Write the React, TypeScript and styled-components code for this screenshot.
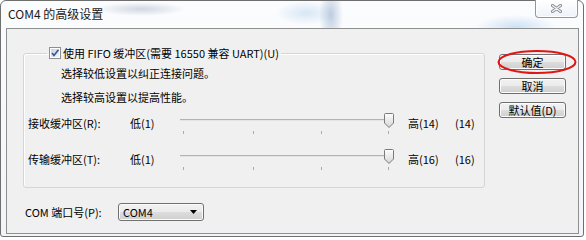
import styled, { createGlobalStyle } from "styled-components";

const GlobalStyle = createGlobalStyle`
  html, body {
    margin: 0;
    padding: 0;
    background: #ffffff;
  }
  body {
    font-family: "Noto Sans CJK SC", sans-serif;
    font-size: 11px;
    color: #000;
  }
`;

const Frame = styled.div`
  box-sizing: border-box;
  width: 584px;
  height: 237px;
  padding: 0 4px 2px 5px;
  border: 1px solid #6f6f6f;
  border-radius: 6px 6px 3px 3px;
  display: flex;
  flex-direction: column;
  background:
    radial-gradient(ellipse 12px 30px at 330px 14px, rgba(120, 150, 190, 0.45), transparent),
    radial-gradient(ellipse 30px 12px at 305px 12px, rgba(170, 205, 235, 0.45), transparent),
    radial-gradient(ellipse 40px 12px at 515px 26px, rgba(160, 200, 235, 0.5), transparent),
    radial-gradient(ellipse 45px 7px at 140px 8px, rgba(110, 130, 160, 0.3), transparent),
    linear-gradient(#fbfcfe, #f1f5fa);
`;

const TitleBar = styled.div`
  height: 27px;
  display: flex;
  justify-content: space-between;
  align-items: flex-start;
`;

const Title = styled.span`
  margin: 5px 0 0 2px;
  font-size: 12px;
  line-height: 16px;
  color: #1a1a1a;
`;

const CloseButton = styled.div`
  box-sizing: border-box;
  width: 43px;
  height: 18px;
  margin: -1px 1px 0 0;
  border: 1px solid #8e98a5;
  border-top: none;
  border-radius: 0 0 4px 4px;
  background: linear-gradient(#ffffff, #eef2f7);
  box-shadow: inset 0 0 0 1px rgba(255, 255, 255, 0.8);
  display: flex;
  align-items: center;
  justify-content: center;
`;

const Client = styled.div`
  flex: 1;
  display: flex;
  padding: 17px 0 0 16px;
  border: 1px solid #8e8f8f;
  background: #f0f0f0;
`;

const LeftColumn = styled.div`
  width: 462px;
  display: flex;
  flex-direction: column;
`;

const Group = styled.fieldset`
  box-sizing: border-box;
  margin: 0;
  padding: 0;
  height: 142px;
  min-width: 0;
  border: 1px solid #d5d5d5;
  border-radius: 3px;
  box-shadow: inset 1px 1px 0 #ffffff;
`;

const Legend = styled.legend`
  margin-left: 23px;
  padding: 0 2px;
  display: flex;
  align-items: center;
  gap: 2px;
  line-height: 14px;
`;

const Hint = styled.div`
  margin-top: 1px;
  padding-left: 37px;
  line-height: 24px;
`;

const Rows = styled.div`
  display: flex;
  flex-direction: column;
  gap: 8px;
  padding-left: 4px;
`;

const SliderRow = styled.div`
  height: 28px;
  display: grid;
  grid-template-columns: 102px 50px 228px 47px auto;
  align-items: center;
`;

const PortRow = styled.div`
  margin-top: 15px;
  padding-left: 2px;
  display: grid;
  grid-template-columns: 93px 86px;
  align-items: center;
`;

const Select = styled.div`
  box-sizing: border-box;
  height: 18px;
  padding: 0 6px 0 4px;
  display: flex;
  align-items: center;
  justify-content: space-between;
  border: 1px solid #707070;
  border-radius: 3px;
  background: linear-gradient(#f2f2f2 0%, #ebebeb 50%, #dddddd 51%, #cfcfcf 100%);
  box-shadow: inset 0 0 0 1px #fbfbfb;
`;

const ButtonColumn = styled.div`
  margin-left: 14px;
  padding-top: 8px;
  display: flex;
  flex-direction: column;
  gap: 8px;
`;

const Button = styled.div`
  position: relative;
  box-sizing: border-box;
  width: 67px;
  height: 16px;
  display: flex;
  align-items: center;
  justify-content: center;
  border: 1px solid #707070;
  border-radius: 3px;
  background: linear-gradient(#f2f2f2 0%, #ebebeb 50%, #dddddd 51%, #cfcfcf 100%);
  box-shadow: inset 0 0 0 1px #fcfcfc;
  line-height: 14px;
`;

const Highlight = styled.svg`
  position: absolute;
  left: -3px;
  top: -6px;
  width: 80px;
  height: 26px;
  overflow: visible;
  pointer-events: none;
`;

function CloseGlyph() {
  return (
    <svg width="11" height="9" viewBox="0 0 11 9">
      <path d="M1.5 1.5 L9.5 7.5 M9.5 1.5 L1.5 7.5" stroke="#8a8f96" strokeWidth="3.2" strokeLinecap="round" />
      <path d="M1.5 1.5 L9.5 7.5 M9.5 1.5 L1.5 7.5" stroke="#f6f6f6" strokeWidth="1.2" strokeLinecap="round" />
    </svg>
  );
}

function CheckBox() {
  return (
    <svg width="12" height="12" viewBox="0 0 12 12">
      <defs>
        <linearGradient id="cbfill" x1="0" y1="0" x2="1" y2="1">
          <stop offset="0" stopColor="#cbd3dd" />
          <stop offset="1" stopColor="#f4f6f9" />
        </linearGradient>
      </defs>
      <rect x="0.5" y="0.5" width="11" height="11" fill="#fff" stroke="#8f8f8f" />
      <rect x="2" y="2" width="8" height="8" fill="url(#cbfill)" />
      <path d="M3 6 L5 8.5 L9.5 2.8" fill="none" stroke="#3a5791" strokeWidth="1.7" />
    </svg>
  );
}

function SliderGraphic() {
  const ticks = [3, 73, 141, 208];
  return (
    <svg width="214" height="28" viewBox="0 0 214 28">
      <defs>
        <linearGradient id="thumbfill" x1="0" y1="0" x2="0" y2="1">
          <stop offset="0" stopColor="#fdfdfd" />
          <stop offset="1" stopColor="#d6d6d6" />
        </linearGradient>
      </defs>
      <rect x="0" y="10" width="208" height="1" fill="#b3b3b3" />
      <rect x="0" y="11" width="208" height="1" fill="#e4e4e4" />
      {ticks.map((x) => (
        <rect key={x} x={x} y="22" width="1" height="3" fill="#ababab" />
      ))}
      <path
        d="M204.5 5.5 Q204.5 4.5 205.5 4.5 H212.5 Q213.5 4.5 213.5 5.5 V14 L209 18.5 L204.5 14 Z"
        fill="url(#thumbfill)"
        stroke="#7a7a7a"
      />
    </svg>
  );
}

function DropArrow() {
  return (
    <svg width="7" height="4" viewBox="0 0 7 4">
      <path d="M0 0 H7 L3.5 4 Z" fill="#000" />
    </svg>
  );
}

const sliders = [
  { label: "接收缓冲区(R):", high: 14 },
  { label: "传输缓冲区(T):", high: 16 },
];

export default function App() {
  return (
    <>
      <GlobalStyle />
      <Frame>
        <TitleBar>
          <Title>COM4 的高级设置</Title>
          <CloseButton>
            <CloseGlyph />
          </CloseButton>
        </TitleBar>
        <Client>
          <LeftColumn>
            <Group>
              <Legend>
                <CheckBox />
                <span>使用 FIFO 缓冲区(需要 16550 兼容 UART)(U)</span>
              </Legend>
              <Hint>
                <div>选择较低设置以纠正连接问题。</div>
                <div>选择较高设置以提高性能。</div>
              </Hint>
              <Rows>
                {sliders.map((s) => (
                  <SliderRow key={s.label}>
                    <span>{s.label}</span>
                    <span>低(1)</span>
                    <SliderGraphic />
                    <span>高({s.high})</span>
                    <span>({s.high})</span>
                  </SliderRow>
                ))}
              </Rows>
            </Group>
            <PortRow>
              <span>COM 端口号(P):</span>
              <Select>
                <span>COM4</span>
                <DropArrow />
              </Select>
            </PortRow>
          </LeftColumn>
          <ButtonColumn>
            <Button>
              确定
              <Highlight viewBox="0 0 80 26">
                <ellipse cx="40" cy="13" rx="38.5" ry="11" fill="none" stroke="#e01515" strokeWidth="2" />
              </Highlight>
            </Button>
            <Button>取消</Button>
            <Button>默认值(D)</Button>
          </ButtonColumn>
        </Client>
      </Frame>
    </>
  );
}
